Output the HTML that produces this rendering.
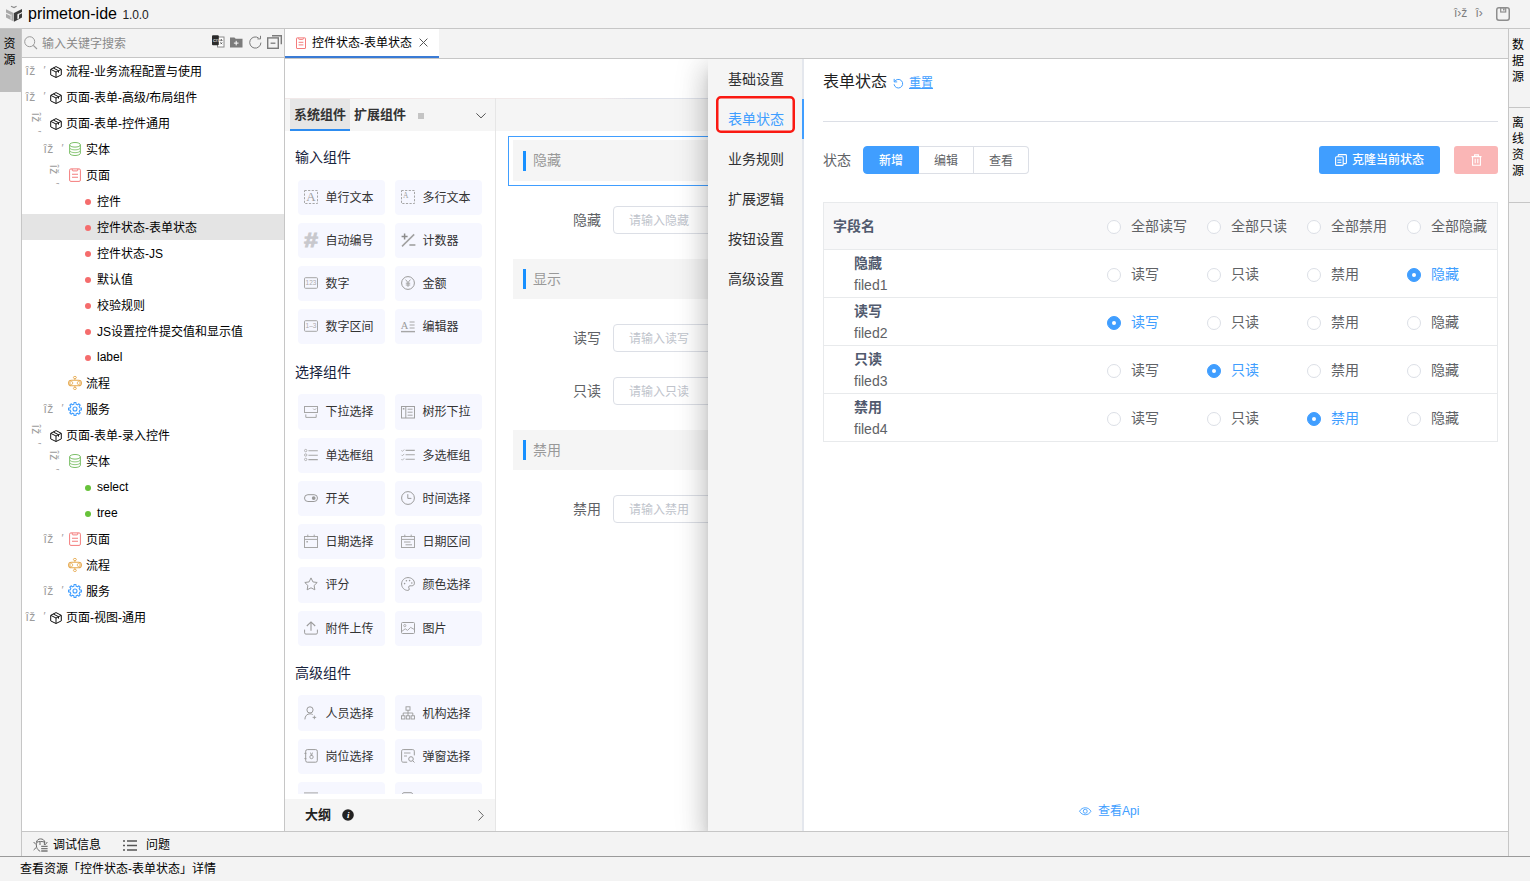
<!DOCTYPE html>
<html lang="zh-CN"><head><meta charset="utf-8"><title>primeton-ide</title>
<style>
*{box-sizing:border-box;margin:0;padding:0}
html,body{width:1530px;height:881px;overflow:hidden;background:#f3f3f3;font-family:"Liberation Sans","Noto Sans CJK SC",sans-serif;font-size:12px;color:#000;line-height:1}
body{position:relative}
.a{position:absolute}
.t{position:absolute;white-space:nowrap}
svg{display:block;position:absolute;overflow:visible}
#title{left:0;top:0;width:1530px;height:29px;border-bottom:1px solid #c6c6c6;background:#f3f3f3}
#lstrip{left:0;top:29px;width:22px;height:828px;border-right:1px solid #c6c6c6;background:#f3f3f3}
#ltab{left:0;top:29px;width:21px;height:63px;background:#bebebe}
#tree{left:22px;top:29px;width:263px;height:802px;background:#fff;border-right:1px solid #c6c6c6}
#search{left:0;top:0;width:262px;height:29px;background:#f3f3f3;border-bottom:1px solid #c6c6c6}
.row{position:absolute;left:0;width:262px;height:26px}
.row.sel{background:#e4e4e4}
.row .lb{position:absolute;top:1px;line-height:26px;white-space:nowrap;font-size:12px;color:#000}
.exp{position:absolute;width:24px;height:24px;top:1px;font-size:12px;letter-spacing:.5px;color:#9c9c9c;line-height:24px;white-space:nowrap;padding-left:1.5px}
.exp.open{transform:rotate(90deg)}
.exp i{font-style:normal;position:absolute;left:19.5px;top:-1px;font-size:11px}
.dot{position:absolute;width:6px;height:6px;border-radius:3px;top:11px}
#tabbar{left:285px;top:29px;width:1223px;height:30px;background:#f3f3f3;border-bottom:1px solid #c6c6c6}
#tab{left:0;top:0;width:154px;height:29px;background:#fff;border-bottom:2px solid #3a7bd5}
#main{left:285px;top:59px;width:1223px;height:772px;background:#fff;overflow:hidden}
#rstrip{left:1508px;top:29px;width:22px;height:828px;border-left:1px solid #c6c6c6;background:#f3f3f3}
.v{position:absolute;left:3px;width:12px;font-size:12px;line-height:16px;text-align:center;color:#000}
#bottom{left:22px;top:831px;width:1486px;height:26px;border-top:1px solid #c6c6c6;background:#f3f3f3}
#status{left:0;top:856px;width:1530px;height:25px;border-top:1px solid #9a9a9a;background:#f3f3f3}
/* component panel */
#cp{left:0;top:39px;width:211px;height:733px;background:#fff;border-right:1px solid #e6e6e6}
#cph{left:0;top:0;width:210px;height:33px;background:#f5f5f5;border-top:1px solid #f1e9e9}
#cph .on{position:absolute;left:5px;top:0;width:60px;height:32px;background:#e6e6e6;border-bottom:2px solid #2d8cf0}
.st{position:absolute;left:10px;font-size:14px;color:#17233d;white-space:nowrap;line-height:20px}
.ci{position:absolute;width:87px;height:35px;background:#f6f7ff;border-radius:4px}
.ci span{position:absolute;left:27.5px;top:1px;line-height:35px;font-size:12px;color:#333;white-space:nowrap}
.ci svg{left:6px;top:10px}
#outline{left:0;top:701px;width:210px;height:32px;background:#f5f5f5}
/* canvas */
#cv{left:211px;top:39px;width:1012px;height:733px;background:#fff}
#cvh{left:0;top:0;width:1012px;height:33px;background:#f5f5f5;border-top:1px solid #f1e9e9}
.blk{position:absolute;left:17px;width:800px;height:40px;background:#f5f5f5}
.blk b{position:absolute;left:10px;top:10px;width:3px;height:20px;background:#1890ff}
.blk span{position:absolute;left:20px;top:0;line-height:40px;font-size:14px;color:#999;font-weight:normal}
.fl{position:absolute;left:0;width:105px;text-align:right;font-size:14px;color:#606266;line-height:28px}
.fi{position:absolute;left:117px;width:700px;height:28px;border:1px solid #dcdfe6;border-radius:4px;background:#fff;padding-left:15px;padding-top:1px;font-size:12px;line-height:26px;color:#c0c4cc}
/* drawer */

#dr{left:423px;top:0;width:800px;height:772px;background:#fff;box-shadow:0 8px 10px -5px rgba(0,0,0,.2),0 16px 24px 2px rgba(0,0,0,.14),0 6px 30px 5px rgba(0,0,0,.12)}
#nav{left:0;top:0;width:96px;height:772px;background:#f5f5f5;border-right:2px solid #e4e7ed}
.ni{position:absolute;left:0;width:94px;height:40px;line-height:40px;font-size:14px;color:#303133;padding-left:20px;white-space:nowrap}
.ni.on{color:#409eff}
#navbar{left:94px;top:40px;width:2px;height:40px;background:#409eff}

.rb{position:absolute;top:87px;height:28px;width:56px;border:1px solid #dcdfe6;border-left:0;background:#fff;font-size:12px;line-height:26px;padding-top:1px;text-align:center;color:#606266}
#tbl{left:115px;top:143px;width:675px;height:240px;border:1px solid #e8eaec;background:#fff}
.tr{position:absolute;left:0;width:673px;border-bottom:1px solid #e8eaec}
.rd{position:absolute;width:14px;height:14px;border:1px solid #dcdfe6;border-radius:7px;background:#fff}
.rd.on{border-color:#409eff;background:#409eff}
.rd.on:after{content:"";position:absolute;left:4px;top:4px;width:4px;height:4px;border-radius:2px;background:#fff}
.rl{position:absolute;font-size:14px;color:#606266;white-space:nowrap;line-height:14px}
.rl.on{color:#409eff}
.fn{position:absolute;left:30px;font-size:14px;white-space:nowrap;line-height:22px}
</style></head>
<body>
<div class="a" id="title"><svg width="16" height="17" viewBox="0 0 16 17" style="left:6px;top:5px"><polygon points="0,4.2 7.7,8 7.7,16.6 0,12.6" fill="#a9a9a9"/><polygon points="8,8 16,4 16,12.6 8,16.8" fill="#3c3c3c"/><polygon points="0,7.4 4.6,9.7 4.6,11 0,8.7" fill="#f0f0f0"/><polygon points="4.6,9.7 5.6,9.2 5.6,14.6 4.6,15" fill="#e4e4e4"/><polygon points="11.4,9.4 13,8.6 13,13.4 11.4,14.2" fill="#f3f3f3"/><polygon points="13,9.4 16,7.9 16,9 13,10.4" fill="#f3f3f3" opacity="0"/><polygon points="11.4,9.4 16,7.1 16,8.2 12.6,9.9" fill="#f3f3f3"/><polyline points="5,1.2 8,2.6 10.6,1.2" fill="none" stroke="#8c8c8c" stroke-width="1.1"/></svg><div class="t" style="left:28px;top:5px;font-size:16px;line-height:18px">primeton-ide</div><div class="t" style="left:122.5px;top:8px;font-size:12px;line-height:14px;letter-spacing:-.15px;color:#222">1.0.0</div><div class="t" style="left:1454px;top:6px;font-size:12px;line-height:14px;color:#7d7d7d">î›ž</div><div class="t" style="left:1475.5px;top:6px;font-size:12px;line-height:14px;color:#7d7d7d">î›</div><svg width="14" height="14" viewBox="0 0 14 14" style="left:1496px;top:7px"><rect x="0.75" y="0.75" width="12.5" height="12.5" rx="2.2" fill="none" stroke="#8e8e8e" stroke-width="1.5"/><rect x="4.7" y="0.8" width="5" height="4.2" fill="none" stroke="#8e8e8e" stroke-width="1.2"/><rect x="7" y="1.5" width="1.6" height="2" fill="#8e8e8e"/></svg></div>
<div class="a" id="lstrip"></div><div class="a" id="ltab"><div class="v" style="top:7px;left:3.5px">资<br>源</div></div>
<div class="a" id="tree"><div class="a" id="search"><svg width="14" height="14" viewBox="0 0 14 14" style="left:1.5px;top:7px"><circle cx="5.7" cy="5.7" r="5" fill="none" stroke="#9a9a9a" stroke-width="1"/><path d="M9.3 9.3L13 13" stroke="#9a9a9a" stroke-width="1.1"/></svg><div class="t" style="left:20px;top:8px;line-height:14px;color:#8a8a8a">输入关键字搜索</div><svg width="13" height="13" viewBox="0 0 13 13" style="left:190px;top:6px"><rect x="5.5" y="2" width="6.5" height="10" fill="#fff" stroke="#8a8a8a" stroke-width="1"/><rect x="0" y="0.2" width="6.8" height="10" rx="1" fill="#2b2b2b"/><text x="0.9" y="6.8" font-size="5.5" font-family="Liberation Sans,sans-serif" fill="#e8e8e8">cn</text><path d="M7.4 5.2h2.6M9.2 4.2l1 1-1 1M8.4 7.4l1.8 1.8M10.2 7.4l-1.8 1.8" stroke="#444" stroke-width=".8" fill="none"/></svg><svg width="13" height="11" viewBox="0 0 13 11" style="left:207.5px;top:7.5px"><path d="M0 0.4h4.4l1.3 1.4h6.8v8.8H0z" fill="#7b7b7b"/><path d="M6.2 3.8v4.6M3.9 6.1h4.6" stroke="#fff" stroke-width="1"/></svg><svg width="13" height="13" viewBox="0 0 13 13" style="left:226.5px;top:6.5px"><path d="M11.9 6.6A5.6 5.6 0 1 1 9.6 2.0" fill="none" stroke="#7b7b7b" stroke-width="1"/><path d="M8.4 2.9h3.1V-.2" fill="none" stroke="#7b7b7b" stroke-width="1"/></svg><svg width="15" height="14" viewBox="0 0 15 14" style="left:245px;top:5.5px"><rect x="0.7" y="2.9" width="10.6" height="10.4" fill="none" stroke="#7b7b7b" stroke-width="1.4"/><path d="M3.6 8.2h4.8" stroke="#7b7b7b" stroke-width="1.3"/><path d="M5 0.7h9.3v8.6" fill="none" stroke="#7b7b7b" stroke-width="1.4"/></svg></div>
<div class="row" style="top:29px"><span class="exp" style="left:2px">îž<i>′</i></span><svg width="12" height="12" viewBox="0 0 12 12" style="left:28px;top:7.5px"><path d="M6 0.6L11.3 3.3V8.9L6 11.5L0.7 8.9V3.3Z" fill="none" stroke="#111" stroke-width="1" stroke-linejoin="round"/><path d="M0.9 3.4L6 6L11.1 3.4M6 6V11.3" fill="none" stroke="#111" stroke-width="1"/><path d="M3.3 2L8.5 4.7V6.6" fill="none" stroke="#111" stroke-width="1"/></svg><span class="lb" style="left:44px">流程-业务流程配置与使用</span></div>
<div class="row" style="top:55px"><span class="exp" style="left:2px">îž<i>′</i></span><svg width="12" height="12" viewBox="0 0 12 12" style="left:28px;top:7.5px"><path d="M6 0.6L11.3 3.3V8.9L6 11.5L0.7 8.9V3.3Z" fill="none" stroke="#111" stroke-width="1" stroke-linejoin="round"/><path d="M0.9 3.4L6 6L11.1 3.4M6 6V11.3" fill="none" stroke="#111" stroke-width="1"/><path d="M3.3 2L8.5 4.7V6.6" fill="none" stroke="#111" stroke-width="1"/></svg><span class="lb" style="left:44px">页面-表单-高级/布局组件</span></div>
<div class="row" style="top:81px"><span class="exp open" style="left:2px">îž<i>′</i></span><svg width="12" height="12" viewBox="0 0 12 12" style="left:28px;top:7.5px"><path d="M6 0.6L11.3 3.3V8.9L6 11.5L0.7 8.9V3.3Z" fill="none" stroke="#111" stroke-width="1" stroke-linejoin="round"/><path d="M0.9 3.4L6 6L11.1 3.4M6 6V11.3" fill="none" stroke="#111" stroke-width="1"/><path d="M3.3 2L8.5 4.7V6.6" fill="none" stroke="#111" stroke-width="1"/></svg><span class="lb" style="left:44px">页面-表单-控件通用</span></div>
<div class="row" style="top:107px"><span class="exp" style="left:20px">îž<i>′</i></span><svg width="12" height="14" viewBox="0 0 12 14" style="left:47px;top:6px"><ellipse cx="6" cy="2.8" rx="5.4" ry="2.3" fill="none" stroke="#7cbf68" stroke-width="1"/><path d="M0.6 2.8v8.4c0 1.3 2.4 2.3 5.4 2.3s5.4-1 5.4-2.3V2.8" fill="none" stroke="#7cbf68" stroke-width="1"/><path d="M0.6 5.6c0 1.3 2.4 2.3 5.4 2.3s5.4-1 5.4-2.3M0.6 8.4c0 1.3 2.4 2.3 5.4 2.3s5.4-1 5.4-2.3" fill="none" stroke="#8fca7c" stroke-width="1"/></svg><span class="lb" style="left:64px">实体</span></div>
<div class="row" style="top:133px"><span class="exp open" style="left:20px">îž<i>′</i></span><svg width="12" height="14" viewBox="0 0 12 14" style="left:47px;top:6px"><rect x="0.6" y="0.9" width="10.8" height="12.5" rx="1.3" fill="none" stroke="#f47c7c" stroke-width="1"/><path d="M3.2 0.9v1.2c0 .5.3.8.8.8h4c.5 0 .8-.3.8-.8V0.9" fill="none" stroke="#f47c7c" stroke-width="1"/><path d="M3 6.2h6M3 9.2h6" stroke="#f47c7c" stroke-width="1.1"/></svg><span class="lb" style="left:64px">页面</span></div>
<div class="row" style="top:159px"><span class="dot" style="left:63px;background:#f56c6c"></span><span class="lb" style="left:75px">控件</span></div>
<div class="row sel" style="top:185px"><span class="dot" style="left:63px;background:#f56c6c"></span><span class="lb" style="left:75px">控件状态-表单状态</span></div>
<div class="row" style="top:211px"><span class="dot" style="left:63px;background:#f56c6c"></span><span class="lb" style="left:75px">控件状态-JS</span></div>
<div class="row" style="top:237px"><span class="dot" style="left:63px;background:#f56c6c"></span><span class="lb" style="left:75px">默认值</span></div>
<div class="row" style="top:263px"><span class="dot" style="left:63px;background:#f56c6c"></span><span class="lb" style="left:75px">校验规则</span></div>
<div class="row" style="top:289px"><span class="dot" style="left:63px;background:#f56c6c"></span><span class="lb" style="left:75px">JS设置控件提交值和显示值</span></div>
<div class="row" style="top:315px"><span class="dot" style="left:63px;background:#f56c6c"></span><span class="lb" style="left:75px;top:0">label</span></div>
<div class="row" style="top:341px"><svg width="14" height="14" viewBox="0 0 14 14" style="left:46px;top:6px"><g fill="none" stroke="#e6a94f"><rect x="0.6" y="4.2" width="12.8" height="5.6" rx="2.8" stroke-width="1.1"/><circle cx="3.3" cy="7" r="1.5" stroke-width=".8"/><circle cx="10.7" cy="7" r="1.5" stroke-width=".8"/><ellipse cx="6.9" cy="1.5" rx="1.5" ry="1.1" stroke-width=".9"/><ellipse cx="6.9" cy="12.4" rx="1.5" ry="1.1" stroke-width=".9"/><path d="M6.9 2.6v1.4M6.9 9.9v1.4" stroke-width=".9"/></g></svg><span class="lb" style="left:64px">流程</span></div>
<div class="row" style="top:367px"><span class="exp" style="left:20px">îž<i>′</i></span><svg width="14" height="14" viewBox="0 0 14 14" style="left:46px;top:6px"><g fill="none" stroke="#409eff" stroke-width="1.1" stroke-linejoin="round"><path d="M5.90 2.23L6.04 0.57L7.96 0.57L8.10 2.23L9.60 2.84L10.87 1.77L12.23 3.13L11.16 4.40L11.77 5.90L13.43 6.04L13.43 7.96L11.77 8.10L11.16 9.60L12.23 10.87L10.87 12.23L9.60 11.16L8.10 11.77L7.96 13.43L6.04 13.43L5.90 11.77L4.40 11.16L3.13 12.23L1.77 10.87L2.84 9.60L2.23 8.10L0.57 7.96L0.57 6.04L2.23 5.90L2.84 4.40L1.77 3.13L3.13 1.77L4.40 2.84Z"/><circle cx="7" cy="7" r="2"/></g></svg><span class="lb" style="left:64px">服务</span></div>
<div class="row" style="top:393px"><span class="exp open" style="left:2px">îž<i>′</i></span><svg width="12" height="12" viewBox="0 0 12 12" style="left:28px;top:7.5px"><path d="M6 0.6L11.3 3.3V8.9L6 11.5L0.7 8.9V3.3Z" fill="none" stroke="#111" stroke-width="1" stroke-linejoin="round"/><path d="M0.9 3.4L6 6L11.1 3.4M6 6V11.3" fill="none" stroke="#111" stroke-width="1"/><path d="M3.3 2L8.5 4.7V6.6" fill="none" stroke="#111" stroke-width="1"/></svg><span class="lb" style="left:44px">页面-表单-录入控件</span></div>
<div class="row" style="top:419px"><span class="exp open" style="left:20px">îž<i>′</i></span><svg width="12" height="14" viewBox="0 0 12 14" style="left:47px;top:6px"><ellipse cx="6" cy="2.8" rx="5.4" ry="2.3" fill="none" stroke="#7cbf68" stroke-width="1"/><path d="M0.6 2.8v8.4c0 1.3 2.4 2.3 5.4 2.3s5.4-1 5.4-2.3V2.8" fill="none" stroke="#7cbf68" stroke-width="1"/><path d="M0.6 5.6c0 1.3 2.4 2.3 5.4 2.3s5.4-1 5.4-2.3M0.6 8.4c0 1.3 2.4 2.3 5.4 2.3s5.4-1 5.4-2.3" fill="none" stroke="#8fca7c" stroke-width="1"/></svg><span class="lb" style="left:64px">实体</span></div>
<div class="row" style="top:445px"><span class="dot" style="left:63px;background:#67c23a"></span><span class="lb" style="left:75px;top:0">select</span></div>
<div class="row" style="top:471px"><span class="dot" style="left:63px;background:#67c23a"></span><span class="lb" style="left:75px;top:0">tree</span></div>
<div class="row" style="top:497px"><span class="exp" style="left:20px">îž<i>′</i></span><svg width="12" height="14" viewBox="0 0 12 14" style="left:47px;top:6px"><rect x="0.6" y="0.9" width="10.8" height="12.5" rx="1.3" fill="none" stroke="#f47c7c" stroke-width="1"/><path d="M3.2 0.9v1.2c0 .5.3.8.8.8h4c.5 0 .8-.3.8-.8V0.9" fill="none" stroke="#f47c7c" stroke-width="1"/><path d="M3 6.2h6M3 9.2h6" stroke="#f47c7c" stroke-width="1.1"/></svg><span class="lb" style="left:64px">页面</span></div>
<div class="row" style="top:523px"><svg width="14" height="14" viewBox="0 0 14 14" style="left:46px;top:6px"><g fill="none" stroke="#e6a94f"><rect x="0.6" y="4.2" width="12.8" height="5.6" rx="2.8" stroke-width="1.1"/><circle cx="3.3" cy="7" r="1.5" stroke-width=".8"/><circle cx="10.7" cy="7" r="1.5" stroke-width=".8"/><ellipse cx="6.9" cy="1.5" rx="1.5" ry="1.1" stroke-width=".9"/><ellipse cx="6.9" cy="12.4" rx="1.5" ry="1.1" stroke-width=".9"/><path d="M6.9 2.6v1.4M6.9 9.9v1.4" stroke-width=".9"/></g></svg><span class="lb" style="left:64px">流程</span></div>
<div class="row" style="top:549px"><span class="exp" style="left:20px">îž<i>′</i></span><svg width="14" height="14" viewBox="0 0 14 14" style="left:46px;top:6px"><g fill="none" stroke="#409eff" stroke-width="1.1" stroke-linejoin="round"><path d="M5.90 2.23L6.04 0.57L7.96 0.57L8.10 2.23L9.60 2.84L10.87 1.77L12.23 3.13L11.16 4.40L11.77 5.90L13.43 6.04L13.43 7.96L11.77 8.10L11.16 9.60L12.23 10.87L10.87 12.23L9.60 11.16L8.10 11.77L7.96 13.43L6.04 13.43L5.90 11.77L4.40 11.16L3.13 12.23L1.77 10.87L2.84 9.60L2.23 8.10L0.57 7.96L0.57 6.04L2.23 5.90L2.84 4.40L1.77 3.13L3.13 1.77L4.40 2.84Z"/><circle cx="7" cy="7" r="2"/></g></svg><span class="lb" style="left:64px">服务</span></div>
<div class="row" style="top:575px"><span class="exp" style="left:2px">îž<i>′</i></span><svg width="12" height="12" viewBox="0 0 12 12" style="left:28px;top:7.5px"><path d="M6 0.6L11.3 3.3V8.9L6 11.5L0.7 8.9V3.3Z" fill="none" stroke="#111" stroke-width="1" stroke-linejoin="round"/><path d="M0.9 3.4L6 6L11.1 3.4M6 6V11.3" fill="none" stroke="#111" stroke-width="1"/><path d="M3.3 2L8.5 4.7V6.6" fill="none" stroke="#111" stroke-width="1"/></svg><span class="lb" style="left:44px">页面-视图-通用</span></div>
</div>
<div class="a" id="tabbar"><div class="a" id="tab"><svg width="10" height="12" viewBox="0 0 10 12" style="left:11px;top:8px"><rect x="0.5" y="0.9" width="9" height="10.6" rx=".4" fill="none" stroke="#f47c7c" stroke-width="1"/><path d="M2.7 0.9v1c0 .4.2.6.6.6h3.4c.4 0 .6-.2.6-.6v-1" fill="none" stroke="#f47c7c" stroke-width=".9"/><path d="M2.6 5.3h4.8M2.6 7.9h4.8" stroke="#f47c7c" stroke-width="1"/></svg><div class="t" style="left:27px;top:7px;line-height:14px">控件状态-表单状态</div><svg width="9" height="9" viewBox="0 0 9 9" style="left:134px;top:9px"><path d="M0.6 0.6L8.4 8.4M8.4 0.6L0.6 8.4" stroke="#555" stroke-width="1"/></svg></div></div>
<div class="a" id="main">
<div class="a" id="cp"><div class="a" id="cph"><div class="on"></div><div class="t" style="left:9px;top:8px;font-size:13px;line-height:16px;font-weight:bold;color:#333">系统组件</div><div class="t" style="left:69px;top:8px;font-size:13px;line-height:16px;font-weight:bold;color:#333">扩展组件</div><div class="a" style="left:133px;top:14px;width:6px;height:6px;background:#c4c4c4"></div><svg width="10" height="5.5" viewBox="0 0 10 5.5" style="left:191px;top:13.5px"><path d="M0.4 0.4L5 4.9L9.6 0.4" fill="none" stroke="#555" stroke-width="1"/></svg></div>
<div class="a" style="left:0;top:33px;width:210px;height:663px;overflow:hidden"><div class="st" style="top:16.20px">输入组件</div><div class="ci" style="left:13px;top:49px;height:35px"><svg width="14" height="14" viewBox="0 0 14 14" style=""><rect x="0.5" y="0.5" width="13" height="13" fill="none" stroke="#a6a6a6" stroke-width="1" stroke-dasharray="2.2 1.4"/><text x="7" y="11.2" font-size="13" font-family="Liberation Serif,serif" text-anchor="middle" fill="#a0a0a0">A</text></svg><span>单行文本</span></div><div class="ci" style="left:110px;top:49px;height:35px"><svg width="14" height="14" viewBox="0 0 14 14" style=""><rect x="0.5" y="0.5" width="13" height="13" fill="none" stroke="#a6a6a6" stroke-width="1" stroke-dasharray="2.2 1.4"/><text x="4.8" y="7.6" font-size="7.5" font-family="Liberation Serif,serif" text-anchor="middle" fill="#a0a0a0">A</text></svg><span>多行文本</span></div><div class="ci" style="left:13px;top:92px;height:35px"><svg width="14" height="14" viewBox="0 0 14 14" style=""><text x="5.3" y="14" font-size="19.5" font-weight="bold" font-style="italic" font-family="Liberation Sans,sans-serif" text-anchor="middle" fill="#c8c8cd" stroke="#c8c8cd" stroke-width=".9" transform="scale(1.28 1)">#</text></svg><span>自动编号</span></div><div class="ci" style="left:110px;top:92px;height:35px"><svg width="14" height="14" viewBox="0 0 14 14" style=""><path d="M1 13.4L13.2 1.4" stroke="#a0a0a0" stroke-width="1.5"/><path d="M0.6 3.6h6M3.6 0.6v6" stroke="#8c8c8c" stroke-width="1.5"/><path d="M8.4 12h6" stroke="#a0a0a0" stroke-width="1.6"/></svg><span>计数器</span></div><div class="ci" style="left:13px;top:135px;height:35px"><svg width="14" height="14" viewBox="0 0 14 14" style=""><rect x="0.5" y="1.7" width="13" height="10.6" rx="1" fill="none" stroke="#a6a6a6" stroke-width="1"/><text x="7" y="9.4" font-size="6.5" font-family="Liberation Sans,sans-serif" text-anchor="middle" fill="#aaa">123</text></svg><span>数字</span></div><div class="ci" style="left:110px;top:135px;height:35px"><svg width="14" height="14" viewBox="0 0 14 14" style=""><circle cx="7" cy="7" r="6.4" fill="none" stroke="#9a9a9a" stroke-width="1"/><path d="M4.6 3.6L7 6.6L9.4 3.6M7 6.6V10.8M4.8 7.2h4.4M4.8 9h4.4" fill="none" stroke="#9a9a9a" stroke-width=".9"/></svg><span>金额</span></div><div class="ci" style="left:13px;top:178px;height:35px"><svg width="14" height="14" viewBox="0 0 14 14" style=""><rect x="0.5" y="1.7" width="13" height="10.6" rx="1" fill="none" stroke="#a6a6a6" stroke-width="1"/><text x="7" y="9.4" font-size="6.5" font-family="Liberation Sans,sans-serif" text-anchor="middle" fill="#aaa">1–3</text></svg><span>数字区间</span></div><div class="ci" style="left:110px;top:178px;height:35px"><svg width="14" height="14" viewBox="0 0 14 14" style=""><text x="3.6" y="9.6" font-size="10.5" font-family="Liberation Serif,serif" text-anchor="middle" fill="#9a9a9a">A</text><path d="M8.6 3h5M8.6 6h5M8.6 9h5" stroke="#a6a6a6" stroke-width="1"/><path d="M0 12.6h14" stroke="#a6a6a6" stroke-width="1.4"/></svg><span>编辑器</span></div>
<div class="st" style="top:231.40px">选择组件</div><div class="ci" style="left:13px;top:263px;height:36px"><svg width="14" height="14" viewBox="0 0 14 14" style="top:10.5px"><rect x="0.5" y="1.5" width="13" height="6" fill="none" stroke="#a6a6a6" stroke-width="1"/><path d="M9.2 3.6l1.4 1.4 1.6-1.6" fill="none" stroke="#a6a6a6" stroke-width=".9"/><path d="M1.8 9.4v3h10.4v-3" fill="none" stroke="#a6a6a6" stroke-width="1"/></svg><span>下拉选择</span></div><div class="ci" style="left:110px;top:263px;height:36px"><svg width="14" height="14" viewBox="0 0 14 14" style="top:10.5px"><rect x="0.5" y="1.5" width="13" height="11.5" fill="none" stroke="#a0a0a0" stroke-width="1"/><path d="M4.8 1.5v11.5" stroke="#a0a0a0" stroke-width="1"/><rect x="1.8" y="3" width="1.6" height="1.6" fill="#a0a0a0"/><path d="M6.6 4.2h5M6.6 7.2h5M6.6 10.2h5" stroke="#a6a6a6" stroke-width="1"/></svg><span>树形下拉</span></div><div class="ci" style="left:13px;top:307px;height:35px"><svg width="14" height="14" viewBox="0 0 14 14" style=""><circle cx="1.7" cy="2.6" r="1.2" fill="none" stroke="#a6a6a6" stroke-width=".8"/><circle cx="1.7" cy="7" r="1.2" fill="none" stroke="#a6a6a6" stroke-width=".8"/><circle cx="1.7" cy="11.4" r="1.2" fill="none" stroke="#a6a6a6" stroke-width=".8"/><path d="M4.4 2.8h9.4M4.4 7.2h9.4M4.4 11.6h9.4" stroke="#a6a6a6" stroke-width="1.1"/></svg><span>单选框组</span></div><div class="ci" style="left:110px;top:307px;height:35px"><svg width="14" height="14" viewBox="0 0 14 14" style=""><path d="M0.4 2.4l1 1 1.8-1.9M0.4 6.8l1 1 1.8-1.9M0.4 11.2l1 1 1.8-1.9" fill="none" stroke="#a6a6a6" stroke-width=".8"/><path d="M4.6 2.4h9.2M4.6 6.8h9.2M4.6 11.2h9.2" stroke="#a6a6a6" stroke-width="1.1"/></svg><span>多选框组</span></div><div class="ci" style="left:13px;top:350px;height:35px"><svg width="14" height="14" viewBox="0 0 14 14" style=""><rect x="0.5" y="3.7" width="13" height="6.8" rx="3.4" fill="none" stroke="#9a9a9a" stroke-width="1"/><circle cx="9.7" cy="7.1" r="1.9" fill="#9a9a9a"/></svg><span>开关</span></div><div class="ci" style="left:110px;top:350px;height:35px"><svg width="14" height="14" viewBox="0 0 14 14" style=""><circle cx="7" cy="7" r="6.4" fill="none" stroke="#9a9a9a" stroke-width="1"/><path d="M6.8 3.2v4.2h3.6" fill="none" stroke="#9a9a9a" stroke-width="1"/></svg><span>时间选择</span></div><div class="ci" style="left:13px;top:393px;height:35px"><svg width="14" height="14" viewBox="0 0 14 14" style=""><rect x="0.5" y="2.5" width="13" height="11" fill="none" stroke="#a6a6a6" stroke-width="1"/><path d="M0.5 5.4h13M3.8 0.6v2.6M10.2 0.6v2.6" stroke="#a6a6a6" stroke-width="1"/><rect x="2.4" y="7" width="1.5" height="1.5" fill="#a6a6a6"/></svg><span>日期选择</span></div><div class="ci" style="left:110px;top:393px;height:35px"><svg width="14" height="14" viewBox="0 0 14 14" style=""><rect x="0.5" y="2.5" width="13" height="11" fill="none" stroke="#a6a6a6" stroke-width="1"/><path d="M0.5 5.4h13M3.8 0.6v2.6M10.2 0.6v2.6" stroke="#a6a6a6" stroke-width="1"/><path d="M3 8h6.5M4.5 10.8h6.5" stroke="#a6a6a6" stroke-width="1"/></svg><span>日期区间</span></div><div class="ci" style="left:13px;top:436px;height:36px"><svg width="14" height="14" viewBox="0 0 14 14" style="top:9.5px"><path d="M7 0.9l1.9 4 4.3.6-3.1 3 .75 4.3L7 10.8l-3.85 2 .75-4.3-3.1-3 4.3-.6z" fill="none" stroke="#9a9a9a" stroke-width="1" stroke-linejoin="round"/></svg><span>评分</span></div><div class="ci" style="left:110px;top:436px;height:36px"><svg width="14" height="14" viewBox="0 0 14 14" style="top:9.5px"><path d="M7 0.6C3.4 0.6 0.6 3.4 0.6 7s2.8 6.4 6.2 6.4c1 0 1.5-.6 1.5-1.3 0-.9-.7-1.2-.7-2 0-.8.6-1.3 1.4-1.3h1.8c1.5 0 2.6-1 2.6-2.6C13.4 3 10.6.6 7 .6z" fill="none" stroke="#9a9a9a" stroke-width="1"/><circle cx="3.6" cy="6.6" r=".8" fill="#9a9a9a"/><circle cx="5.4" cy="3.8" r=".8" fill="#9a9a9a"/><circle cx="8.6" cy="3.6" r=".8" fill="#9a9a9a"/><circle cx="10.8" cy="6" r=".8" fill="#9a9a9a"/></svg><span>颜色选择</span></div><div class="ci" style="left:13px;top:480px;height:35px"><svg width="14" height="14" viewBox="0 0 14 14" style=""><path d="M7 9.8V1.2M2.8 5L7 0.9l4.2 4.1" fill="none" stroke="#9a9a9a" stroke-width="1.1"/><path d="M0.6 8.6v3.2c0 .8.5 1.3 1.3 1.3h10.2c.8 0 1.3-.5 1.3-1.3V8.6" fill="none" stroke="#9a9a9a" stroke-width="1"/></svg><span>附件上传</span></div><div class="ci" style="left:110px;top:480px;height:35px"><svg width="14" height="14" viewBox="0 0 14 14" style=""><rect x="0.5" y="1.5" width="13" height="11" rx="1" fill="none" stroke="#a0a0a0" stroke-width="1"/><circle cx="3.8" cy="4.6" r="1.1" fill="none" stroke="#a0a0a0" stroke-width=".8"/><path d="M0.8 10.4l3.4-2.6 2.4 1.6 3-3 3.6 2" fill="none" stroke="#a0a0a0" stroke-width=".9"/></svg><span>图片</span></div>
<div class="st" style="top:532.20px">高级组件</div><div class="ci" style="left:13px;top:564px;height:36px"><svg width="14" height="14" viewBox="0 0 14 14" style="top:11px"><circle cx="6" cy="3.9" r="3.1" fill="none" stroke="#9a9a9a" stroke-width="1"/><path d="M0.9 13.4c0-3.4 2.2-5.6 5.1-5.6 1 0 1.9.25 2.7.7" fill="none" stroke="#9a9a9a" stroke-width="1"/><path d="M10.4 9.6v3.6M8.6 11.4h3.6" stroke="#9a9a9a" stroke-width=".9"/></svg><span style="top:2px">人员选择</span></div><div class="ci" style="left:110px;top:564px;height:36px"><svg width="14" height="14" viewBox="0 0 14 14" style="top:11px"><rect x="5" y="0.8" width="4" height="3.4" fill="none" stroke="#9a9a9a" stroke-width=".9"/><rect x="0.5" y="9.8" width="3.4" height="3.2" fill="none" stroke="#9a9a9a" stroke-width=".9"/><rect x="5.3" y="9.8" width="3.4" height="3.2" fill="none" stroke="#9a9a9a" stroke-width=".9"/><rect x="10.1" y="9.8" width="3.4" height="3.2" fill="none" stroke="#9a9a9a" stroke-width=".9"/><path d="M7 4.2v5.6M2.2 9.8V7h9.6v2.8" fill="none" stroke="#9a9a9a" stroke-width=".9"/></svg><span style="top:2px">机构选择</span></div><div class="ci" style="left:13px;top:608px;height:35px"><svg width="14" height="14" viewBox="0 0 14 14" style=""><rect x="1.7" y="0.6" width="11.6" height="12.6" rx="1.6" fill="none" stroke="#9a9a9a" stroke-width="1"/><path d="M0.4 4.4h2M0.4 9.6h2" stroke="#9a9a9a" stroke-width=".9"/><circle cx="7.5" cy="8" r="1.7" fill="none" stroke="#9a9a9a" stroke-width=".9"/><path d="M6.5 3.6l1 3 1-3" fill="none" stroke="#9a9a9a" stroke-width=".9"/></svg><span>岗位选择</span></div><div class="ci" style="left:110px;top:608px;height:35px"><svg width="14" height="14" viewBox="0 0 14 14" style=""><path d="M13.3 6.4V2.2c0-1-.6-1.6-1.6-1.6H2.2C1.2.6.6 1.2.6 2.2v9.4c0 1 .6 1.6 1.6 1.6h4" fill="none" stroke="#9a9a9a" stroke-width="1"/><path d="M3 4h6.5M3 7h3" stroke="#a6a6a6" stroke-width="1"/><circle cx="10" cy="10" r="2.3" fill="none" stroke="#9a9a9a" stroke-width="1"/><path d="M11.7 11.7l1.8 1.8" stroke="#9a9a9a" stroke-width="1"/></svg><span>弹窗选择</span></div><div class="ci" style="left:13px;top:651px;height:35px"><svg width="14" height="14" viewBox="0 0 14 14" style=""><path d="M0 0.9h14" stroke="#a6a6a6" stroke-width="1"/></svg><span></span></div><div class="ci" style="left:110px;top:651px;height:35px"><svg width="14" height="14" viewBox="0 0 14 14" style=""><path d="M1.6 3V1.8c0-.7.4-1.1 1.1-1.1h7.6c.7 0 1.1.4 1.1 1.1V3" fill="none" stroke="#9a9a9a" stroke-width="1"/></svg><span></span></div>
</div><div class="a" id="outline"><div class="t" style="left:20px;top:8px;font-size:13px;line-height:16px;font-weight:bold;color:#222">大纲</div><svg width="12" height="12" viewBox="0 0 12 12" style="left:56.5px;top:10px"><circle cx="6" cy="6" r="5.8" fill="#222"/><text x="6.2" y="9.4" font-size="9" font-weight="bold" font-style="italic" font-family="Liberation Serif,serif" text-anchor="middle" fill="#fff">i</text></svg><svg width="6" height="11" viewBox="0 0 6 11" style="left:193px;top:10.5px"><path d="M0.5 0.5L5.3 5.5L0.5 10.5" fill="none" stroke="#666" stroke-width="1"/></svg></div></div>
<div class="a" id="cv"><div class="a" id="cvh"></div><div class="a" style="left:104px;top:0;width:110px;height:1px;background:linear-gradient(to right,#f1e9e9,#dfe2ea 30%)"></div><div class="a" style="left:12px;top:38px;width:820px;height:50px;border:1px solid #409eff"></div><div class="blk" style="top:42px;height:41px"><b style="top:11px"></b><span style="line-height:41px">隐藏</span></div><div class="fl" style="top:108px">隐藏</div><div class="fi" style="top:108px">请输入隐藏</div><div class="blk" style="top:161px"><b></b><span>显示</span></div><div class="fl" style="top:226px">读写</div><div class="fi" style="top:226px">请输入读写</div><div class="fl" style="top:279px">只读</div><div class="fi" style="top:279px">请输入只读</div><div class="blk" style="top:332px"><b></b><span>禁用</span></div><div class="fl" style="top:397px">禁用</div><div class="fi" style="top:397px">请输入禁用</div></div>
<div class="a" id="dr"><div class="a" id="nav"><div class="ni" style="top:0px">基础设置</div><div class="ni on" style="top:40px">表单状态</div><div class="ni" style="top:80px">业务规则</div><div class="ni" style="top:120px">扩展逻辑</div><div class="ni" style="top:160px">按钮设置</div><div class="ni" style="top:200px">高级设置</div><svg width="79" height="37" style="left:8px;top:37px"><rect x="1.25" y="1.25" width="76.5" height="34.5" rx="3.5" fill="none" stroke="#fa1912" stroke-width="2.5"/></svg></div><div class="a" id="navbar"></div>
<div class="t" style="left:115px;top:12px;font-size:16px;line-height:22px;color:#1f1f1f">表单状态</div><svg width="11" height="11" viewBox="0 0 11 11" style="left:185px;top:18.5px"><path d="M1.6 3.6A4.3 4.3 0 1 1 1.1 6.3" fill="none" stroke="#409eff" stroke-width="1"/><path d="M1.2 0.9v3h3" fill="none" stroke="#409eff" stroke-width="1"/></svg><div class="t" style="left:201px;top:17px;font-size:12px;line-height:14px;color:#409eff;text-decoration:underline">重置</div><div class="a" style="left:115px;top:62px;width:675px;height:1px;background:#dcdfe6"></div><div class="t" style="left:115px;top:91px;font-size:14px;line-height:20px;color:#606266">状态</div><div class="rb" style="left:155px;width:56px;background:#409eff;border-color:#409eff;color:#fff;border-left:1px solid #409eff;border-radius:4px 0 0 4px;font-weight:500">新增</div><div class="rb" style="left:211px;width:55px">编辑</div><div class="rb" style="left:266px;width:55px;border-radius:0 4px 4px 0">查看</div><div class="a" style="left:611px;top:87px;width:121px;height:28px;background:#409eff;border-radius:3px"></div><svg width="12" height="12" viewBox="0 0 12 12" style="left:627px;top:95px"><rect x="0.6" y="2.8" width="7.6" height="8.6" rx="1" fill="none" stroke="#fff" stroke-width="1.1"/><path d="M3.2 2.6V1.4c0-.5.3-.8.8-.8h6.6c.5 0 .8.3.8.8v7.4c0 .5-.3.8-.8.8H8.4" fill="none" stroke="#fff" stroke-width="1.1"/><path d="M2.4 6h4M2.4 8.4h4" stroke="#fff" stroke-width="1"/></svg><div class="t" style="left:644px;top:94px;font-size:12px;line-height:14px;color:#fff;font-weight:500">克隆当前状态</div><div class="a" style="left:746px;top:87px;width:44px;height:28px;background:#fab6b6;border-radius:3px"></div><svg width="11" height="12" viewBox="0 0 11 12" style="left:762.5px;top:95px"><path d="M0.5 2.6h10M3.6 2.4V0.9h3.8v1.5M1.6 2.8v8.4h7.8V2.8M4.2 4.8v4.4M6.8 4.8v4.4" fill="none" stroke="#fff" stroke-width="1.1"/></svg><div class="a" id="tbl"><div class="tr" style="top:0;height:47px;background:#f8f8f9"></div><div class="t" style="left:9px;top:13px;font-size:14px;line-height:20px;font-weight:bold;color:#515a6e">字段名</div><span class="rd" style="left:283px;top:17px"></span><span class="rl" style="left:307px;top:16px">全部读写</span><span class="rd" style="left:383px;top:17px"></span><span class="rl" style="left:407px;top:16px">全部只读</span><span class="rd" style="left:483px;top:17px"></span><span class="rl" style="left:507px;top:16px">全部禁用</span><span class="rd" style="left:583px;top:17px"></span><span class="rl" style="left:607px;top:16px">全部隐藏</span><div class="tr" style="top:47px;height:48px"></div><div class="fn" style="top:49px;font-weight:bold;color:#515a6e">隐藏</div><div class="fn" style="top:71px;color:#606266">filed1</div><span class="rd" style="left:283px;top:65px"></span><span class="rl" style="left:307px;top:64px">读写</span><span class="rd" style="left:383px;top:65px"></span><span class="rl" style="left:407px;top:64px">只读</span><span class="rd" style="left:483px;top:65px"></span><span class="rl" style="left:507px;top:64px">禁用</span><span class="rd on" style="left:583px;top:65px"></span><span class="rl on" style="left:607px;top:64px">隐藏</span>
<div class="tr" style="top:95px;height:48px"></div><div class="fn" style="top:97px;font-weight:bold;color:#515a6e">读写</div><div class="fn" style="top:119px;color:#606266">filed2</div><span class="rd on" style="left:283px;top:113px"></span><span class="rl on" style="left:307px;top:112px">读写</span><span class="rd" style="left:383px;top:113px"></span><span class="rl" style="left:407px;top:112px">只读</span><span class="rd" style="left:483px;top:113px"></span><span class="rl" style="left:507px;top:112px">禁用</span><span class="rd" style="left:583px;top:113px"></span><span class="rl" style="left:607px;top:112px">隐藏</span>
<div class="tr" style="top:143px;height:48px"></div><div class="fn" style="top:145px;font-weight:bold;color:#515a6e">只读</div><div class="fn" style="top:167px;color:#606266">filed3</div><span class="rd" style="left:283px;top:161px"></span><span class="rl" style="left:307px;top:160px">读写</span><span class="rd on" style="left:383px;top:161px"></span><span class="rl on" style="left:407px;top:160px">只读</span><span class="rd" style="left:483px;top:161px"></span><span class="rl" style="left:507px;top:160px">禁用</span><span class="rd" style="left:583px;top:161px"></span><span class="rl" style="left:607px;top:160px">隐藏</span>
<div class="tr" style="top:191px;height:48px"></div><div class="fn" style="top:193px;font-weight:bold;color:#515a6e">禁用</div><div class="fn" style="top:215px;color:#606266">filed4</div><span class="rd" style="left:283px;top:209px"></span><span class="rl" style="left:307px;top:208px">读写</span><span class="rd" style="left:383px;top:209px"></span><span class="rl" style="left:407px;top:208px">只读</span><span class="rd on" style="left:483px;top:209px"></span><span class="rl on" style="left:507px;top:208px">禁用</span><span class="rd" style="left:583px;top:209px"></span><span class="rl" style="left:607px;top:208px">隐藏</span>
</div>
<svg width="12.5" height="8.5" viewBox="0 0 14 9" style="left:370.5px;top:748px"><path d="M0.6 4.5C2.2 1.8 4.4 0.6 7 0.6s4.8 1.2 6.4 3.9C11.8 7.2 9.6 8.4 7 8.4S2.2 7.2 0.6 4.5z" fill="none" stroke="#409eff" stroke-width="1"/><circle cx="7" cy="4.5" r="2.2" fill="none" stroke="#409eff" stroke-width="1"/></svg><div class="t" style="left:390px;top:745px;font-size:12px;line-height:14px;color:#409eff">查看Api</div></div>
</div>
<div class="a" id="rstrip"><div class="v" style="top:8px">数<br>据<br>源</div><div class="a" style="left:0;top:78px;width:21px;height:1px;background:#c6c6c6"></div><div class="v" style="top:86px">离<br>线<br>资<br>源</div><div class="a" style="left:0;top:173px;width:21px;height:1px;background:#c6c6c6"></div></div>
<div class="a" id="bottom"><svg width="15" height="14" viewBox="0 0 15 14" style="left:10.5px;top:6px"><g fill="none" stroke="#6a6a6a" stroke-width="1"><path d="M3.3 4.4C4 1.9 5.5 0.9 7.6 0.9S11.3 2 12.1 4.4"/><path d="M3.4 4.3C5.8 3.2 9.6 3.2 12 4.3"/><path d="M4 4.4C2.6 7.2 3.4 11.6 7.2 13.3"/><path d="M7 4V7M11.4 4V7"/><path d="M0.6 4L3 6.5M0.6 12L3.2 9.5M14.3 4L12.2 6.8"/></g><path d="M8.2 8.4H14.6M8.2 10.7H14.6M8.2 13H14.6" stroke="#777" stroke-width="1.3"/></svg><div class="t" style="left:31px;top:6px;line-height:14px">调试信息</div><svg width="14" height="11" viewBox="0 0 14 11" style="left:101px;top:8px"><path d="M0 1h2M4 1h10M0 5.5h2M4 5.5h10M0 10h2M4 10h10" stroke="#555" stroke-width="1.6"/></svg><div class="t" style="left:124px;top:6px;line-height:14px">问题</div></div>
<div class="a" id="status"><div class="t" style="left:20px;top:5px;line-height:14px">查看资源「控件状态-表单状态」详情</div></div>
</body></html>
